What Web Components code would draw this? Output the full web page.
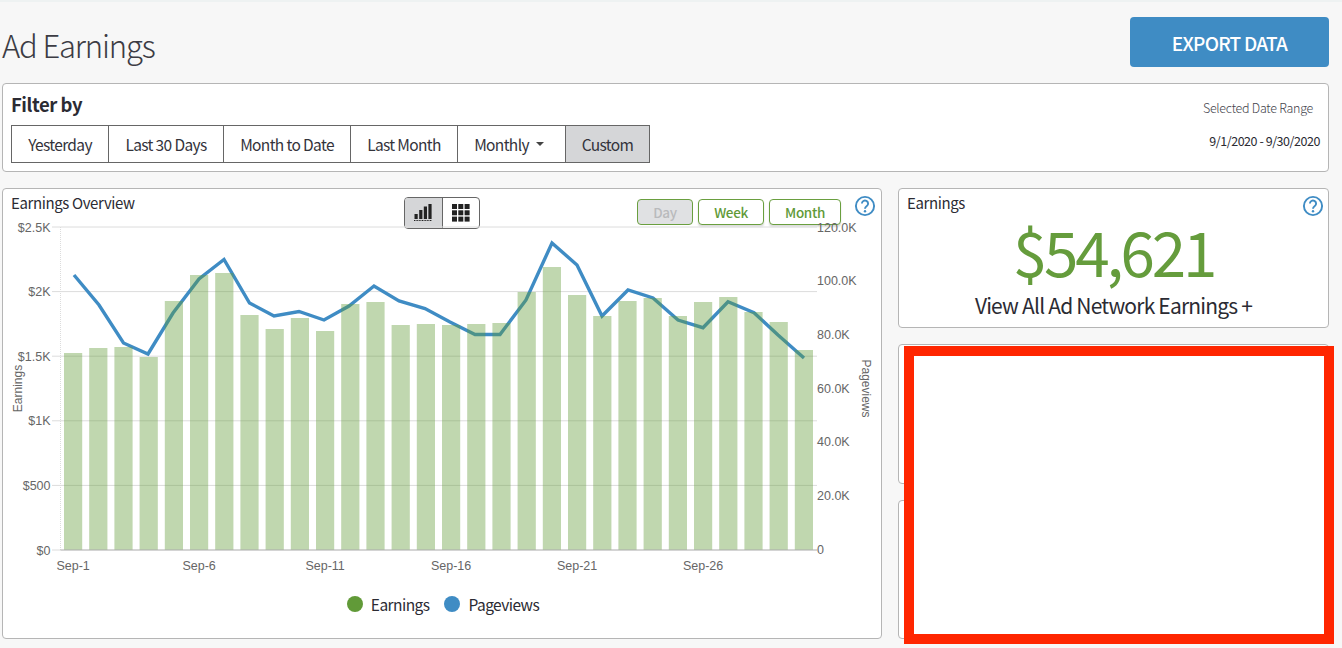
<!doctype html>
<html lang="en">
<head>
<meta charset="utf-8">
<title>Ad Earnings</title>
<style>
  html, body { margin: 0; height: 100%; background: #f7f7f7; overflow: hidden; }
  body { font-family: "Noto Sans CJK SC", "Noto Sans", sans-serif; color: #2b2b33; }
</style>
</head>
<body>
<ad-earnings-page></ad-earnings-page>

<script>
// Shared look of the white rounded boxes.
const PANEL = `
  background: #fff; border: 1px solid #b5b5b5; border-radius: 4px; box-sizing: border-box;
`;

class HelpIcon extends HTMLElement {
  connectedCallback() {
    this.attachShadow({ mode: "open" }).innerHTML = `
      <style>:host { display: block; width: 22px; height: 22px; } svg { display: block; }</style>
      <svg width="22" height="22" viewBox="0 0 22 22" fill="none" stroke="#3f8cc4" aria-hidden="true">
        <circle cx="11" cy="11" r="9.1" stroke-width="1.9"/>
        <path d="M7.9 8.6a3.1 3.1 0 1 1 4.9 2.5c-1.2.9-1.8 1.4-1.8 2.7" stroke-width="1.9"/>
        <circle cx="11" cy="16.3" r="1.2" fill="#3f8cc4" stroke="none"/>
      </svg>`;
  }
}

class PageHeader extends HTMLElement {
  connectedCallback() {
    this.attachShadow({ mode: "open" }).innerHTML = `
      <style>
        :host { display: flex; justify-content: space-between; height: 81px; box-sizing: border-box; padding-top: 15px; }
        h1 { margin: 8px 0 0; font-size: 31px; line-height: 40px; font-weight: 300; color: #3c3c44; letter-spacing: -1.15px; }
        button {
          width: 199px; height: 50px; background: #3f8cc4; color: #fff; border: 0; border-radius: 4px;
          font-family: inherit; font-size: 19px; font-weight: 500; letter-spacing: -.75px; padding: 0;
        }
      </style>
      <h1><slot></slot></h1>
      <button>EXPORT DATA</button>`;
  }
}

class FilterPanel extends HTMLElement {
  connectedCallback() {
    const tabs = [
      ["Yesterday", 96], ["Last 30 Days", 115], ["Month to Date", 127], ["Last Month", 107],
      ["Monthly", 108], ["Custom", 84],
    ];
    const html = tabs.map(([label, w]) => {
      const cls = label === "Custom" ? "tab on" : label === "Monthly" ? "tab menu" : "tab";
      const caret = label === "Monthly" ? `<i></i>` : "";
      return `<div class="${cls}" style="width:${w}px">${label}${caret}</div>`;
    }).join("");
    this.attachShadow({ mode: "open" }).innerHTML = `
      <style>
        :host { ${PANEL} display: flex; justify-content: space-between; height: 89px; padding: 7px 8px 0; }
        h2 { margin: 0; font-size: 18.5px; line-height: 27px; font-weight: 700; color: #2b2b33; letter-spacing: -.45px; }
        .tabs { display: flex; margin-top: 7px; border: 1px solid #666; height: 38px; box-sizing: border-box; }
        .tab { display: flex; align-items: center; justify-content: center; gap: 7px; box-sizing: border-box;
               font-size: 15.5px; letter-spacing: -.64px; border-left: 1px solid #666; color: #33333b; padding-bottom: 1px; }
        .tab:first-child { border-left: 0; }
        .tab.menu { padding-right: 5px; }
        .tab.on { background: #d5d6d8; }
        i { width: 0; height: 0; border: 4px solid transparent; border-top-color: #444; border-bottom: 0; }
        .range { font-size: 12.5px; text-align: right; color: #2b2b33; }
        .range div:first-child { margin: 9px 7px 0 0; font-weight: 300; line-height: 16px; letter-spacing: -.28px; color: #44444c; }
        .range div:last-child { margin-top: 17px; line-height: 16px; letter-spacing: -.45px; }
      </style>
      <div>
        <h2>Filter by</h2>
        <div class="tabs">${html}</div>
      </div>
      <div class="range">
        <div>Selected Date Range</div>
        <div>9/1/2020 - 9/30/2020</div>
      </div>`;
  }
}

// bar tops and line points are read off the reference, in page pixels
const BAR_TOPS = [353,348,347,357,301,275,273,315,329,318,331,304,302,325,324,325,324,323,292,267,295,316,301,298,316,302,297,312,322,350];
const LINE = [
  [74,275],[99,305],[123.5,343],[148,354],[173,313],[199,279],[224,259.5],[249.5,303],[274,316],[299,311.5],
  [324,320],[349,306],[374,286],[399,301],[425,308.5],[450,322],[475,334.5],[500,334.5],[526,300],[552,243],
  [577,265],[602,316],[628,290],[653,298],[678,320],[703,327.7],[728,301.7],[754,312.7],[778,335],[804,358],
];
const LEFT_TICKS = ["$2.5K", "$2K", "$1.5K", "$1K", "$500", "$0"];
const RIGHT_TICKS = ["120.0K", "100.0K", "80.0K", "60.0K", "40.0K", "20.0K", "0"];
const X_TICKS = [["Sep-1", 0], ["Sep-6", 5], ["Sep-11", 10], ["Sep-16", 15], ["Sep-21", 20], ["Sep-26", 25]];

class EarningsChart extends HTMLElement {
  connectedCallback() {
    const OX = 3, OY = 189; // panel's inner corner in page pixels
    const BASE = 550, TOP = 227, STEP = 25.2, X0 = 60.5;
    const gy = (BASE - TOP) / 5;
    let grid = "", labels = "";
    LEFT_TICKS.forEach((t, i) => {
      const y = TOP + gy * i;
      if (i < 5) grid += `<line x1="${X0}" x2="817" y1="${y}" y2="${y}" stroke="#dcdcdc"/>`;
      grid += `<line x1="52" x2="${X0}" y1="${y}" y2="${y}" stroke="#dcdcdc"/>`;
      labels += `<text x="50.5" y="${y + 4.5}" text-anchor="end">${t}</text>`;
    });
    RIGHT_TICKS.forEach((t, i) => {
      labels += `<text x="817" y="${227 + 53.7 * i + 4.5}">${t}</text>`;
    });
    X_TICKS.forEach(([t, i]) => {
      labels += `<text x="${X0 + STEP * (i + 0.5)}" y="570" text-anchor="middle">${t}</text>`;
    });
    const bars = BAR_TOPS.map((top, i) =>
      `<rect x="${64 + STEP * i}" y="${top}" width="18.2" height="${BASE - top}"/>`).join("");
    const line = LINE.map((p) => p.join(",")).join(" ");
    this.attachShadow({ mode: "open" }).innerHTML = `
      <style>
        :host { display: block; }
        svg { display: block; }
        text { font: 12.5px "Liberation Sans", Arial, sans-serif; fill: #666; }
        .axis { font-size: 12px; }
      </style>
      <svg width="878" height="395" viewBox="${OX} ${OY + 0} 878 395" role="img" aria-label="Earnings overview chart">
        <line x1="${X0}" x2="${X0}" y1="${TOP}" y2="${BASE}" stroke="#dcdcdc" stroke-dasharray="1 1"/>
        ${grid}
        <polyline points="${line}" fill="none" stroke="#3f8cc4" stroke-width="3.4"/>
        <g fill="#619a38" fill-opacity=".4">${bars}</g>
        <line x1="${X0}" x2="817" y1="${BASE}" y2="${BASE}" stroke="#aaa"/>
        ${labels}
        <text class="axis" transform="translate(21.5 388.5) rotate(-90)" text-anchor="middle">Earnings</text>
        <text class="axis" transform="translate(862 388.5) rotate(90)" text-anchor="middle">Pageviews</text>
      </svg>`;
  }
}

class ChartPanel extends HTMLElement {
  connectedCallback() {
    this.attachShadow({ mode: "open" }).innerHTML = `
      <style>
        :host { ${PANEL} display: block; height: 451px; }
        .head { display: flex; align-items: flex-start; height: 38px; }
        .name { font-size: 15px; line-height: 20px; margin: 4px 0 0 8px; width: 393px; color: #2b2b33; letter-spacing: -.38px; }
        .toggle { display: flex; width: 76px; height: 32px; margin-top: 8px; box-sizing: border-box; border: 1px solid #666;
                  border-radius: 4px; overflow: hidden; background: #fff; }
        .toggle div { flex: 1; display: flex; align-items: center; justify-content: center; }
        .toggle div:first-child { background: #d5d6d8; border-right: 1px solid #666; }
        .ranges { display: flex; gap: 5px; margin: 10px 0 0 157px; }
        .ranges span { height: 26px; box-sizing: border-box; border: 1px solid #6a9f3f; border-radius: 4px; background: #fff;
                       color: #619a38; font-size: 13.5px; font-weight: 500; letter-spacing: -.35px; line-height: 24px; text-align: center;
                       box-shadow: 0 2px 2px rgba(0,0,0,.14); }
        .ranges .off { background: #e0e1e3; color: #b9babc; box-shadow: none; }
        help-icon { margin: 6px 0 0 13px; }
        .legend { display: flex; justify-content: center; align-items: center; margin-top: 10px; padding-left: 2px; gap: 15px;
                  font-size: 15.5px; letter-spacing: -.55px; line-height: 20px; }
        .legend span { display: flex; align-items: center; gap: 8px; }
        .legend i { width: 16px; height: 16px; border-radius: 50%; }
        earnings-chart { margin-top: -38px; }
      </style>
      <div class="head">
        <div class="name">Earnings Overview</div>
        <div class="toggle">
          <div><svg width="20" height="18" viewBox="0 0 20 18" fill="#222">
            <rect x="1.5" y="10" width="3.2" height="5"/><rect x="6.2" y="6" width="3.2" height="9"/>
            <rect x="10.8" y="2.5" width="3.2" height="12.5"/><rect x="15.4" y="0" width="3.2" height="15"/>
            <path d="M1 16.5h18" stroke="#222" stroke-dasharray="1 .6" fill="none"/>
          </svg></div>
          <div><svg width="18" height="18" viewBox="0 0 18 18" fill="#222">
            <rect width="5" height="5"/><rect x="6.3" width="5" height="5"/><rect x="12.6" width="5" height="5"/>
            <rect y="6.3" width="5" height="5"/><rect x="6.3" y="6.3" width="5" height="5"/><rect x="12.6" y="6.3" width="5" height="5"/>
            <rect y="12.6" width="5" height="5"/><rect x="6.3" y="12.6" width="5" height="5"/><rect x="12.6" y="12.6" width="5" height="5"/>
          </svg></div>
        </div>
        <div class="ranges">
          <span class="off" style="width:56px">Day</span>
          <span style="width:66px">Week</span>
          <span style="width:72px">Month</span>
        </div>
        <help-icon></help-icon>
      </div>
      <earnings-chart></earnings-chart>
      <div class="legend">
        <span><i style="background:#619a38"></i>Earnings</span>
        <span><i style="background:#3f8cc4"></i>Pageviews</span>
      </div>`;
  }
}

class StatCard extends HTMLElement {
  connectedCallback() {
    this.attachShadow({ mode: "open" }).innerHTML = `
      <style>
        :host { ${PANEL} display: block; height: 140px; position: relative; text-align: center; }
        .name { font-size: 15px; letter-spacing: -.38px; line-height: 20px; margin: 4px 0 0 8px; text-align: left; }
        .row { display: flex; justify-content: space-between; }
        help-icon { margin: 6px 4px 0 0; }
        .value { font-size: 62px; letter-spacing: -3.2px; line-height: 58px; color: #659c3c; margin-top: 4px; }
        .link { font-size: 21px; letter-spacing: -.8px; line-height: 28px; margin-top: 12px; color: #2b2b33; }
      </style>
      <div class="row"><div class="name">${this.getAttribute("label")}</div><help-icon></help-icon></div>
      <div class="value">${this.getAttribute("value")}</div>
      <div class="link"><slot></slot></div>`;
  }
}

class BlankCard extends HTMLElement {
  connectedCallback() {
    this.attachShadow({ mode: "open" }).innerHTML = `<style>:host { ${PANEL} display: block; }</style>`;
  }
}

class AdEarningsPage extends HTMLElement {
  connectedCallback() {
    this.attachShadow({ mode: "open" }).innerHTML = `
      <style>
        :host { display: block; position: relative; height: 648px; box-sizing: border-box; overflow: hidden;
                border-top: 2px solid #eef2f2; padding: 0 13px 0 2px; }
        .main { display: grid; grid-template-columns: 880px 431px; column-gap: 16px; margin-top: 16px; }
        .side { display: grid; grid-template-rows: 140px 140px 139px; row-gap: 16px; height: 451px; }
        .redact { position: absolute; left: 904px; top: 344px; width: 430px; height: 298px; box-sizing: border-box;
                  border: 10px solid #ff2600; background: #fff; }
      </style>
      <page-header>Ad Earnings</page-header>
      <filter-panel></filter-panel>
      <div class="main">
        <chart-panel></chart-panel>
        <div class="side">
          <stat-card label="Earnings" value="$54,621">View All Ad Network Earnings +</stat-card>
          <blank-card></blank-card>
          <blank-card></blank-card>
        </div>
      </div>
      <div class="redact"></div>`;
  }
}

customElements.define("help-icon", HelpIcon);
customElements.define("page-header", PageHeader);
customElements.define("filter-panel", FilterPanel);
customElements.define("earnings-chart", EarningsChart);
customElements.define("chart-panel", ChartPanel);
customElements.define("stat-card", StatCard);
customElements.define("blank-card", BlankCard);
customElements.define("ad-earnings-page", AdEarningsPage);
</script>
</body>
</html>
